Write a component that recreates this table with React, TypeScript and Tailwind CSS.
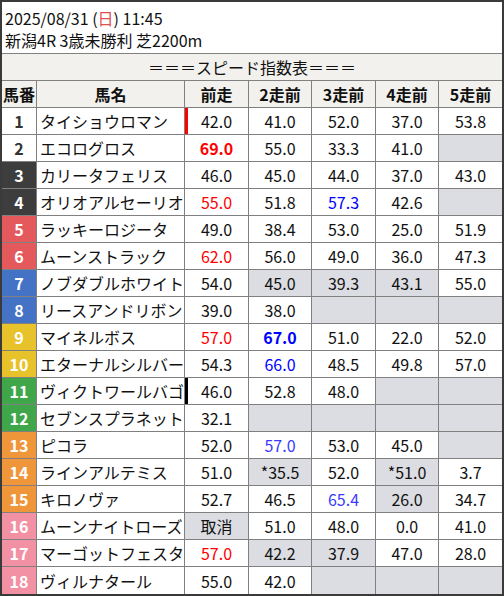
import React from 'react';

type Cell = { v?: string; c?: 'red' | 'blue' | 'blue2'; b?: boolean; g?: boolean };

const GATE: Record<number, string> = {
  1: 'bg-white text-[#333333]',
  2: 'bg-white text-[#333333]',
  3: 'bg-[#3d3d3d] text-white',
  4: 'bg-[#3d3d3d] text-white',
  5: 'bg-[#e45a5c] text-white',
  6: 'bg-[#e45a5c] text-white',
  7: 'bg-[#4472c4] text-white',
  8: 'bg-[#4472c4] text-white',
  9: 'bg-[#e8c22a] text-white',
  10: 'bg-[#e8c22a] text-white',
  11: 'bg-[#3fa64a] text-white',
  12: 'bg-[#3fa64a] text-white',
  13: 'bg-[#f0963a] text-white',
  14: 'bg-[#f0963a] text-white',
  15: 'bg-[#f0963a] text-white',
  16: 'bg-[#f291a3] text-white',
  17: 'bg-[#f291a3] text-white',
  18: 'bg-[#f291a3] text-white',
};

const G: Cell = { g: true };

const rows: { no: number; name: string; mark?: 'red' | 'black'; cells: Cell[] }[] = [
  { no: 1, name: 'タイショウロマン', mark: 'red', cells: [{ v: '42.0' }, { v: '41.0' }, { v: '52.0' }, { v: '37.0' }, { v: '53.8' }] },
  { no: 2, name: 'エコログロス', cells: [{ v: '69.0', c: 'red', b: true }, { v: '55.0' }, { v: '33.3' }, { v: '41.0' }, G] },
  { no: 3, name: 'カリータフェリス', cells: [{ v: '46.0' }, { v: '45.0' }, { v: '44.0' }, { v: '37.0' }, { v: '43.0' }] },
  { no: 4, name: 'オリオアルセーリオ', cells: [{ v: '55.0', c: 'red' }, { v: '51.8' }, { v: '57.3', c: 'blue' }, { v: '42.6' }, G] },
  { no: 5, name: 'ラッキーロジータ', cells: [{ v: '49.0' }, { v: '38.4' }, { v: '53.0' }, { v: '25.0' }, { v: '51.9' }] },
  { no: 6, name: 'ムーンストラック', cells: [{ v: '62.0', c: 'red' }, { v: '56.0' }, { v: '49.0' }, { v: '36.0' }, { v: '47.3' }] },
  { no: 7, name: 'ノブダブルホワイト', cells: [{ v: '54.0' }, { v: '45.0', g: true }, { v: '39.3', g: true }, { v: '43.1', g: true }, { v: '55.0' }] },
  { no: 8, name: 'リースアンドリボン', cells: [{ v: '39.0' }, { v: '38.0' }, G, G, G] },
  { no: 9, name: 'マイネルボス', cells: [{ v: '57.0', c: 'red' }, { v: '67.0', c: 'blue', b: true }, { v: '51.0' }, { v: '22.0' }, { v: '52.0' }] },
  { no: 10, name: 'エターナルシルバー', cells: [{ v: '54.3' }, { v: '66.0', c: 'blue' }, { v: '48.5' }, { v: '49.8' }, { v: '57.0' }] },
  { no: 11, name: 'ヴィクトワールバゴ', mark: 'black', cells: [{ v: '46.0' }, { v: '52.8' }, { v: '48.0' }, G, G] },
  { no: 12, name: 'セブンスプラネット', cells: [{ v: '32.1' }, G, G, G, G] },
  { no: 13, name: 'ピコラ', cells: [{ v: '52.0' }, { v: '57.0', c: 'blue2' }, { v: '53.0' }, { v: '45.0' }, G] },
  { no: 14, name: 'ラインアルテミス', cells: [{ v: '51.0' }, { v: '*35.5', g: true }, { v: '52.0' }, { v: '*51.0', g: true }, { v: '3.7' }] },
  { no: 15, name: 'キロノヴァ', cells: [{ v: '52.7' }, { v: '46.5' }, { v: '65.4', c: 'blue2' }, { v: '26.0', g: true }, { v: '34.7' }] },
  { no: 16, name: 'ムーンナイトローズ', cells: [{ v: '取消', g: true }, { v: '51.0' }, { v: '48.0' }, { v: '0.0' }, { v: '41.0' }] },
  { no: 17, name: 'マーゴットフェスタ', cells: [{ v: '57.0', c: 'red' }, { v: '42.2', g: true }, { v: '37.9', g: true }, { v: '47.0' }, { v: '28.0' }] },
  { no: 18, name: 'ヴィルナタール', cells: [{ v: '55.0' }, { v: '42.0' }, G, G, G] },
];

const COLS = 'grid grid-cols-[35px_148px_64px_63px_64px_63px_63px]';

function colorClass(c?: Cell['c']) {
  if (c === 'red') return 'text-[#ff0000]';
  if (c === 'blue') return 'text-[#0000ff]';
  if (c === 'blue2') return 'text-[#3a3aff]';
  return 'text-[#111111]';
}

export default function App() {
  return (
    <div
      className="w-[504px] h-[596px] border-2 border-[#3a3a3a] bg-white overflow-hidden text-[16px] text-[#111111]"
      style={{ fontFamily: '"Noto Sans CJK JP", "Noto Sans", sans-serif' }}
    >
      <div className="h-[52px] border-b border-[#808080] px-[3px] pt-[5px] leading-[22px]">
        <div>
          2025/08/31 (<span className="text-[#e05050]">日</span>) 11:45
        </div>
        <div>新潟4R 3歳未勝利 芝2200m</div>
      </div>

      <div className="h-[27px] border-b border-[#808080] bg-[#f2f1ed] flex items-center justify-center">
        ＝＝＝スピード指数表＝＝＝
      </div>

      <div className={`${COLS} h-[27px] border-b border-[#808080] bg-[#f2f1ed] font-bold`}>
        {['馬番', '馬名', '前走', '2走前', '3走前', '4走前', '5走前'].map((h, i) => (
          <div
            key={h}
            className={`flex items-center justify-center ${i < 6 ? 'border-r border-[#808080]' : ''}`}
          >
            {h}
          </div>
        ))}
      </div>

      {rows.map((r, ri) => (
        <div
          key={r.no}
          className={`${COLS} h-[27px] ${ri < rows.length - 1 ? 'border-b border-[#808080]' : ''}`}
        >
          <div className={`flex items-center justify-center font-bold border-r border-[#808080] ${GATE[r.no]}`}>
            {r.no}
          </div>
          <div className="flex items-center pl-[3px] border-r border-[#808080] whitespace-nowrap overflow-hidden">
            {r.name}
          </div>
          {r.cells.map((c, ci) => (
            <div
              key={ci}
              className={`relative flex items-center justify-center ${ci < 4 ? 'border-r border-[#808080]' : ''} ${
                c.g ? 'bg-[#dcdde2]' : 'bg-white'
              } ${colorClass(c.c)} ${c.b ? 'font-bold' : ''}`}
            >
              {ci === 0 && r.mark === 'red' && <span className="absolute left-0 top-0 bottom-0 w-[3px] bg-[#ff0000]" />}
              {ci === 0 && r.mark === 'black' && <span className="absolute left-0 top-0 bottom-0 w-[3px] bg-black" />}
              {c.v}
            </div>
          ))}
        </div>
      ))}
    </div>
  );
}
